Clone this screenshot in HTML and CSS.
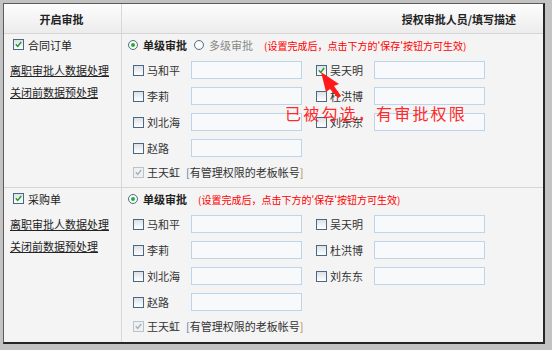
FILE: index.html
```html
<!DOCTYPE html>
<html lang="zh-CN">
<head>
    <meta charset="UTF-8">
    <title>授权审批设置</title>
    <link rel="stylesheet" href="styles.css">
</head>
<body>
    <div class="page">
        <div class="panel">
            <div class="row head">
                <div class="side">开启审批</div>
                <div class="main">授权审批人员/填写描述</div>
            </div>

            <!-- 合同订单 -->
            <div class="row group">
                <div class="side">
                    <div class="doc"><span class="cb on"><svg viewBox="0 0 11 11"><path d="M2.2 5.2 L4.5 7.8 L8.8 2.4"/></svg></span>合同订单</div>
                    <a class="link" href="#">离职审批人数据处理</a>
                    <a class="link" href="#">关闭前数据预处理</a>
                </div>
                <div class="main">
                    <div class="mode">
                        <span class="radio on"></span><b>单级审批</b>
                        <span class="radio second"></span><span class="off">多级审批</span>
                        <span class="tip">(设置完成后，点击下方的'保存'按钮方可生效)</span>
                    </div>
                    <div class="people">
                        <div class="person"><span class="cb"></span><span class="name">马和平</span><input class="field" type="text"></div>
                        <div class="person"><span class="cb on"><svg viewBox="0 0 11 11"><path d="M2.2 5.2 L4.5 7.8 L8.8 2.4"/></svg></span><span class="name">吴天明</span><input class="field" type="text"></div>
                        <div class="person"><span class="cb"></span><span class="name">李莉</span><input class="field" type="text"></div>
                        <div class="person"><span class="cb"></span><span class="name">杜洪博</span><input class="field" type="text"></div>
                        <div class="person"><span class="cb"></span><span class="name">刘北海</span><input class="field" type="text"></div>
                        <div class="person"><span class="cb"></span><span class="name">刘东东</span><input class="field" type="text"></div>
                        <div class="person"><span class="cb"></span><span class="name">赵路</span><input class="field" type="text"></div>
                    </div>
                    <div class="boss"><span class="cb dim"><svg viewBox="0 0 11 11"><path d="M2.2 5.2 L4.5 7.8 L8.8 2.4"/></svg></span><span class="name">王天虹</span><span class="lb">[</span>有管理权限的老板帐号<span class="rb">]</span></div>
                </div>
            </div>

            <!-- 采购单 -->
            <div class="row group last">
                <div class="side">
                    <div class="doc"><span class="cb on"><svg viewBox="0 0 11 11"><path d="M2.2 5.2 L4.5 7.8 L8.8 2.4"/></svg></span>采购单</div>
                    <a class="link" href="#">离职审批人数据处理</a>
                    <a class="link" href="#">关闭前数据预处理</a>
                </div>
                <div class="main">
                    <div class="mode">
                        <span class="radio on"></span><b>单级审批</b>
                        <span class="tip">(设置完成后，点击下方的'保存'按钮方可生效)</span>
                    </div>
                    <div class="people">
                        <div class="person"><span class="cb"></span><span class="name">马和平</span><input class="field" type="text"></div>
                        <div class="person"><span class="cb"></span><span class="name">吴天明</span><input class="field" type="text"></div>
                        <div class="person"><span class="cb"></span><span class="name">李莉</span><input class="field" type="text"></div>
                        <div class="person"><span class="cb"></span><span class="name">杜洪博</span><input class="field" type="text"></div>
                        <div class="person"><span class="cb"></span><span class="name">刘北海</span><input class="field" type="text"></div>
                        <div class="person"><span class="cb"></span><span class="name">刘东东</span><input class="field" type="text"></div>
                        <div class="person"><span class="cb"></span><span class="name">赵路</span><input class="field" type="text"></div>
                    </div>
                    <div class="boss"><span class="cb dim"><svg viewBox="0 0 11 11"><path d="M2.2 5.2 L4.5 7.8 L8.8 2.4"/></svg></span><span class="name">王天虹</span><span class="lb">[</span>有管理权限的老板帐号<span class="rb">]</span></div>
                </div>
            </div>
        </div>

        <!-- annotation drawn over the form -->
        <div class="note">已被勾选，有审批权限</div>
        <svg class="arrow" width="552" height="350" viewBox="0 0 552 350">
            <polygon points="321,72 326,92 330,89 338,98 341,96 334,86 339,84"/>
        </svg>
    </div>
</body>
</html>
```

FILE: styles.css
```css
body {
    margin: 0;
    background-color: #c3c3c3;
    font-family: "Noto Sans CJK SC", "Liberation Sans", sans-serif;
    font-size: 11px;
    color: #333;
}
.page {
    position: relative;
    width: 552px;
    height: 350px;
    padding-top: 3px;
    box-sizing: border-box;
}
.panel {
    margin-left: 3px;
    width: 542px;
    height: 341px;
    box-sizing: border-box;
    border-top: 1px solid #5c5c5c;
    border-left: 1px solid #5c5c5c;
    border-right: 2px solid #262626;
    border-bottom: 2px solid #262626;
    background-color: #f4f4f4;
}
.row {
    display: grid;
    grid-template-columns: 118px 1fr;
    box-sizing: border-box;
    border-bottom: 1px solid #d5d5d5;
}
.row > .side {
    border-right: 1px solid #d8d8d8;
}
.head {
    height: 30px;
    background: linear-gradient(#fdfdfd, #ececec);
    font-weight: bold;
    color: #222;
    line-height: 31px;
}
.head .side {
    text-align: center;
    padding-right: 2px;
}
.head .main {
    text-align: right;
    padding-right: 27px;
}
.group {
    height: 154px;
}
.group.last {
    height: 154px;
    border-bottom: none;
}
.group .side {
    padding-left: 6px;
}
.doc {
    display: flex;
    align-items: center;
    height: 22px;
    padding-left: 3px;
    margin-bottom: 3px;
    color: #222;
}
.doc .cb {
    margin-right: 4px;
    position: relative;
    top: -1px;
}
.link {
    display: block;
    height: 22px;
    line-height: 22px;
    color: #222;
    text-decoration: underline;
}

/* checkboxes and radios */
.cb {
    display: inline-block;
    width: 11px;
    height: 11px;
    box-sizing: border-box;
    border: 1px solid #4c6784;
    background: linear-gradient(#dde1e6, #ffffff);
    flex: none;
}
.cb svg {
    display: block;
    width: 9px;
    height: 9px;
}
.cb path {
    fill: none;
    stroke: #1f9a28;
    stroke-width: 1.7;
}
.cb.dim {
    border-color: #b9c3cd;
    background: #f0f0f0;
}
.cb.dim path {
    stroke: #a7b1bb;
}
.radio {
    display: inline-block;
    width: 10px;
    height: 10px;
    box-sizing: border-box;
    border: 1px solid #55708c;
    border-radius: 50%;
    background: radial-gradient(circle, #ffffff 40%, #dfe4ea);
    flex: none;
    position: relative;
}
.radio.on::after {
    content: "";
    position: absolute;
    left: 2px;
    top: 2px;
    width: 4px;
    height: 4px;
    border-radius: 50%;
    background-color: #22b02a;
}
.radio.second {
    margin-left: 7px;
}

.group .main {
    padding-left: 6px;
}
.mode {
    display: flex;
    align-items: center;
    height: 22px;
    margin-bottom: 1px;
}
.mode b {
    margin-left: 5px;
    color: #222;
}
.mode .off {
    margin-left: 5px;
    color: #888;
}
.tip {
    margin-left: 11px;
    font-size: 10px;
    color: #f00;
}
.people {
    display: grid;
    grid-template-columns: 170px 170px;
    grid-auto-rows: 26px;
    column-gap: 13px;
    padding-left: 5px;
}
.person {
    display: flex;
    align-items: center;
}
.person .cb {
    margin-right: 3px;
}
.name {
    width: 44px;
    color: #333;
}
.field {
    width: 111px;
    height: 18px;
    box-sizing: border-box;
    border: 1px solid #bcd5ec;
    background-color: #f8f9fa;
    margin: 0;
    padding: 0;
}
.boss {
    display: flex;
    align-items: center;
    height: 22px;
    padding-left: 5px;
    color: #333;
}
.boss .cb {
    margin-right: 3px;
}
.boss .name {
    width: auto;
    margin-right: 6px;
}
.lb {
    color: #4a7fb5;
}
.rb {
    color: #b58a4a;
}

/* annotation */
.note {
    position: absolute;
    left: 285px;
    top: 101px;
    font-size: 16px;
    letter-spacing: 2.2px;
    color: #ff2a2a;
    line-height: 24px;
}
.arrow {
    position: absolute;
    left: 0;
    top: 0;
}
.arrow polygon {
    fill: #ff1a1a;
}
```
